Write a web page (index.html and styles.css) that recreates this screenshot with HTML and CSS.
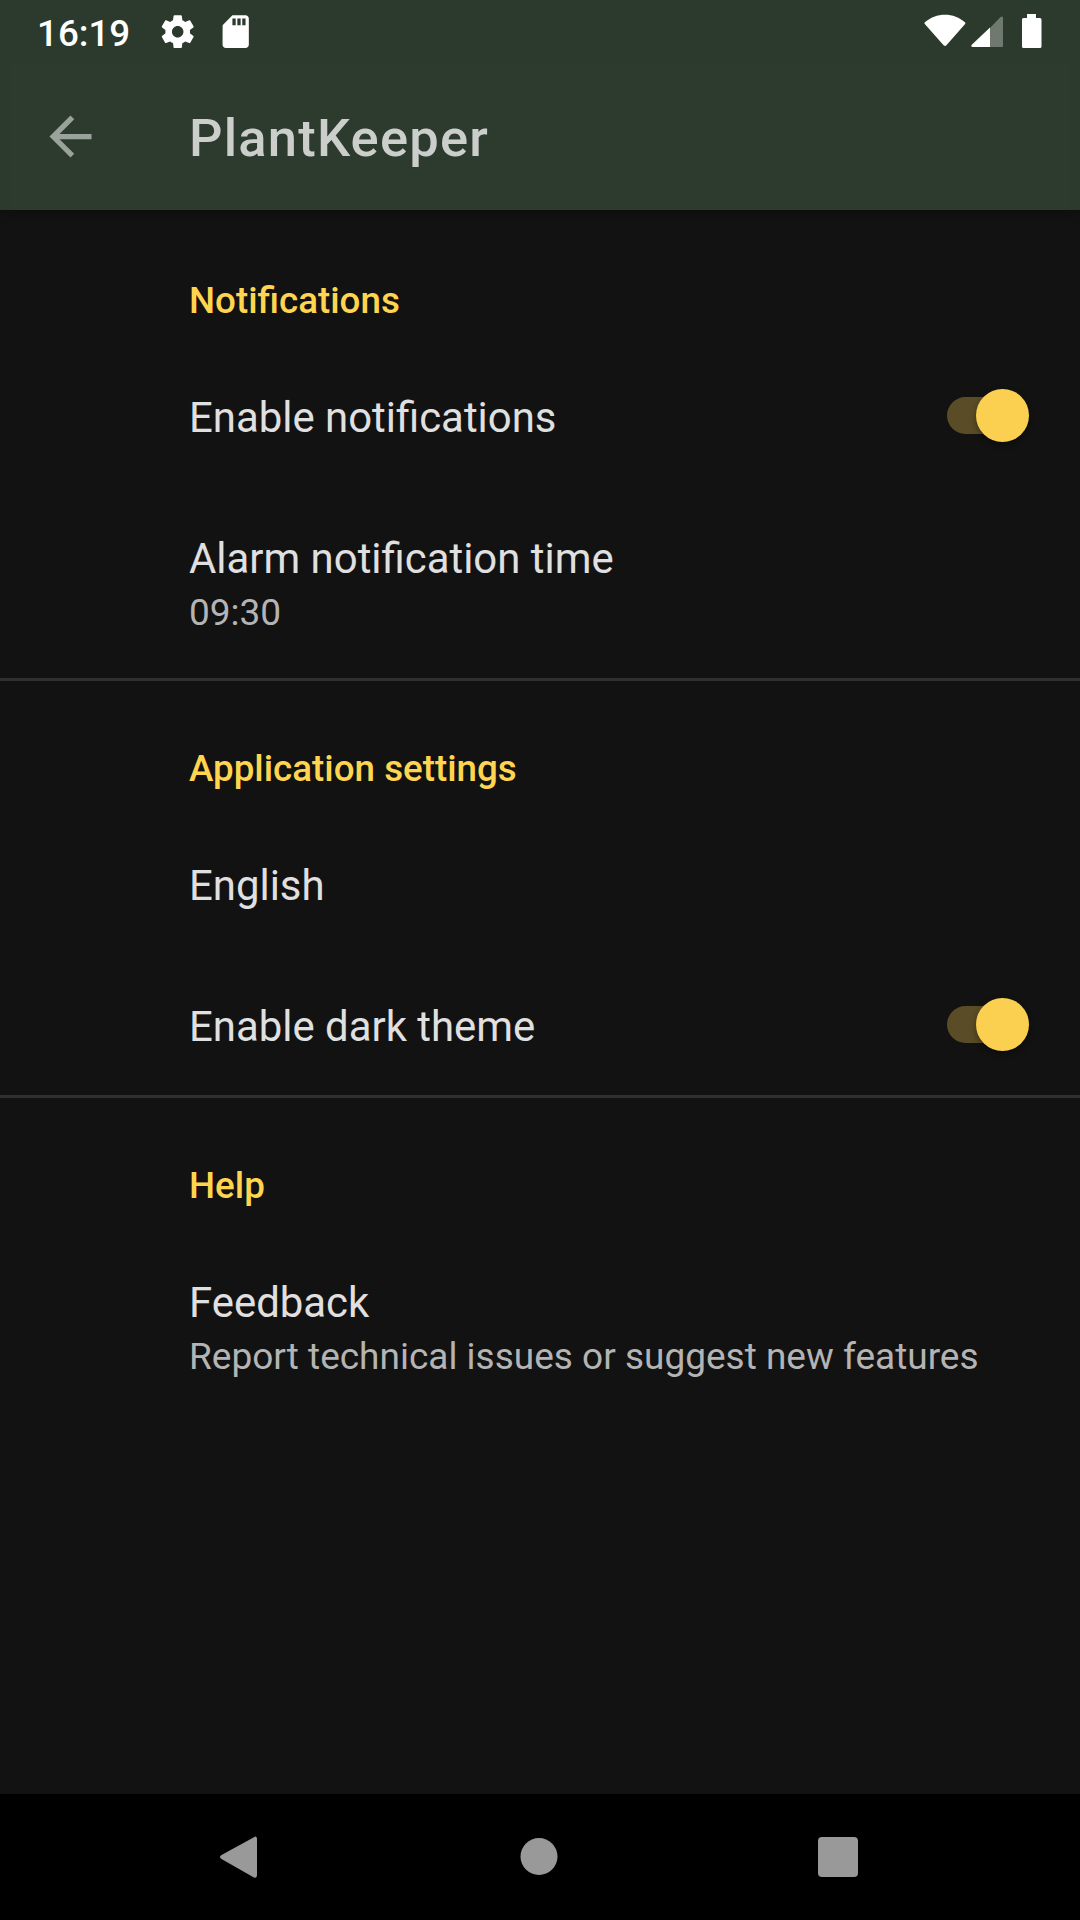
FILE: index.html
```html
<!DOCTYPE html>
<html lang="en">
<head>
<meta charset="utf-8">
<title>PlantKeeper</title>
<link rel="stylesheet" href="styles.css">
</head>
<body>
<div class="screen">
  <header class="top">
    <div class="status">
      <span class="clock">16:19</span>
      <svg class="status-icon gear" viewBox="0 0 24 24"><path d="M19.43 12.98c.04-.32.07-.64.07-.98s-.03-.66-.07-.98l2.11-1.65c.19-.15.24-.42.12-.64l-2-3.46c-.12-.22-.39-.3-.61-.22l-2.49 1c-.52-.4-1.08-.73-1.69-.98l-.38-2.65C14.46 2.18 14.25 2 14 2h-4c-.25 0-.46.18-.49.42l-.38 2.65c-.61.25-1.17.59-1.69.98l-2.49-1c-.23-.09-.49 0-.61.22l-2 3.46c-.13.22-.07.49.12.64l2.11 1.65c-.04.32-.07.65-.07.98s.03.66.07.98l-2.11 1.65c-.19.15-.24.42-.12.64l2 3.46c.12.22.39.3.61.22l2.49-1c.52.4 1.08.73 1.69.98l.38 2.65c.03.24.24.42.49.42h4c.25 0 .46-.18.49-.42l.38-2.65c.61-.25 1.17-.59 1.69-.98l2.49 1c.23.09.49 0 .61-.22l2-3.46c.12-.22.07-.49-.12-.64l-2.11-1.65zM12 15.5c-1.93 0-3.5-1.57-3.5-3.5s1.57-3.5 3.5-3.5 3.5 1.57 3.5 3.5-1.57 3.5-3.5 3.5z"/></svg>
      <svg class="status-icon card" viewBox="0 0 24 24"><path d="M18 2h-8L4.02 8 4 20c0 1.1.9 2 2 2h12c1.1 0 2-.9 2-2V4c0-1.1-.9-2-2-2zm-6 6h-2V4h2v4zm3 0h-2V4h2v4zm3 0h-2V4h2v4z"/></svg>
      <svg class="system" viewBox="0 0 118 36" width="118" height="36">
        <path d="M.6 8.600C12-1.900 30-1.900 41.200 8.600q.4.800-.3 1.600L22.400 31.200q-1.400 1.400-2.800 0L1 10.200q-.8-.8-.4-1.600z"/>
        <path opacity=".32" d="M65 15 76.600 3q2.400-1.600 2.400 1V32q0 1-1 1H65z"/>
        <path d="M66 13.500V33H48.500q-2-.6-1-2z"/>
        <path d="M103 0h9v4h4q1.500 0 1.500 1.500v27q0 1.500-1.500 1.500H99.500q-1.500 0-1.500-1.500v-27Q98 4 99.500 4h3.500z"/>
      </svg>
    </div>
    <div class="toolbar">
      <svg class="back" viewBox="0 0 24 24"><path d="M20 11H7.830l5.590-5.590L12 4l-8 8 8 8 1.410-1.410L7.830 13H20v-2z"/></svg>
      <h1 class="title">PlantKeeper</h1>
    </div>
  </header>
  <main class="settings">
    <section class="group">
      <h2 class="category">Notifications</h2>
      <div class="row"><div class="name">Enable notifications</div><div class="switch"><i class="thumb"></i></div></div>
      <div class="row detailed"><div><div class="name">Alarm notification time</div><div class="summary">09:30</div></div></div>
    </section>
    <section class="group divided">
      <h2 class="category">Application settings</h2>
      <div class="row"><div class="name">English</div></div>
      <div class="row"><div class="name">Enable dark theme</div><div class="switch"><i class="thumb"></i></div></div>
    </section>
    <section class="group divided">
      <h2 class="category">Help</h2>
      <div class="row detailed"><div><div class="name">Feedback</div><div class="summary">Report technical issues or suggest new features</div></div></div>
    </section>
  </main>
  <nav class="navbar">
    <svg class="nav-icon" viewBox="0 0 48 48"><path d="M38.500 4.400Q42 2 42 6V42q0 4-3.500 2.200L6.500 26Q3.500 24 6.500 22z"/></svg>
    <svg class="nav-icon" viewBox="0 0 48 48"><circle cx="24" cy="23.500" r="18.500"/></svg>
    <svg class="nav-icon" viewBox="0 0 48 48"><rect x="4" y="4" width="40" height="40" rx="4"/></svg>
  </nav>
</div>
</body>
</html>
```

FILE: styles.css
```css
* { box-sizing: border-box; margin: 0; padding: 0; }
body { background: #121212; font-family: Roboto, "Liberation Sans", sans-serif; }
svg { display: block; flex: none; }
.screen { width: 1080px; height: 1920px; display: flex; flex-direction: column; background: #121212; overflow: hidden; }

.top { height: 210px; background: #2b3a2d; box-shadow: 0 2px 10px rgba(0, 0, 0, .3); }
.status { height: 63px; display: flex; align-items: center; padding: 0 38px 0 37px; color: #fff; fill: #fff; }
.clock { font-size: 36.75px; font-weight: 500; line-height: 43px; width: 121px; padding-top: 3px; }
.status-icon { width: 39.4px; height: 39.4px; }
.card { margin-left: 18.6px; }
.system { margin-left: auto; }
.toolbar { height: 147px; margin: 0 10px; padding-left: 29px; display: flex; align-items: center; background: #2d3b2e; }
.back { width: 63px; height: 63px; fill: #9aa39b; }
.title { margin-left: 87px; padding-top: 4px; font-size: 52.5px; line-height: 61px; letter-spacing: 1.2px; font-weight: 500; color: #cbcecb; }

.settings { flex: 1; }
.divided { box-shadow: inset 0 3px #303030; }
.category { height: 135px; padding: 69px 0 0 189px; font-size: 36.75px; line-height: 43px; font-weight: 500; color: #ffd54f; }
.row { height: 141px; padding: 48px 51px 0 189px; display: flex; justify-content: space-between; }
.detailed { height: 192px; }
.name { font-size: 41.9px; line-height: 49px; color: #e0e0e0; }
.summary { margin-top: 8px; font-size: 37px; line-height: 43px; color: #b4b4b4; }
.switch { width: 82px; height: 37px; margin-top: 4px; padding-left: 29px; display: flex; align-items: center; background: linear-gradient(#5a4c26, #5a4c26) 0 0 / 60px 100% no-repeat; border-radius: 18.5px; }
.thumb { flex: none; width: 53px; height: 53px; border-radius: 50%; background: #fbd050; box-shadow: 0 3px 6px rgba(0, 0, 0, .35); }

.navbar { height: 126px; padding: 0 218px 0 215px; display: flex; align-items: center; justify-content: space-between; background: #000; fill: #999; }
.nav-icon { width: 48px; height: 48px; }
```
